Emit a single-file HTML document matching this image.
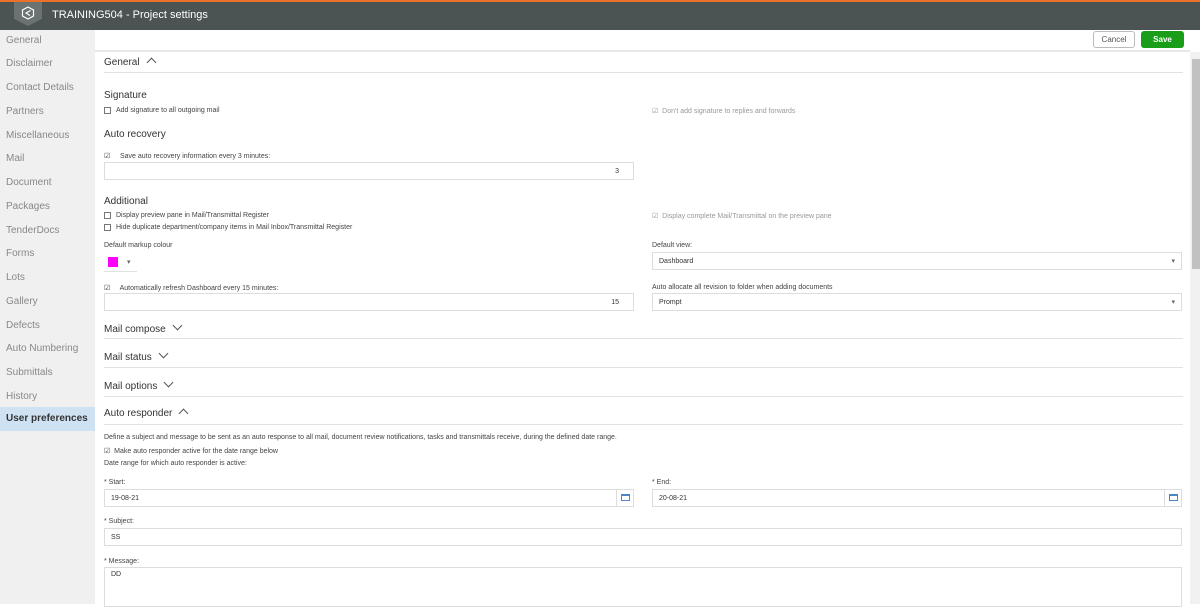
<!DOCTYPE html>
<html><head><meta charset="utf-8"><style>
*{box-sizing:border-box;margin:0;padding:0}
body{width:1200px;height:604px;overflow:hidden;font-family:"Liberation Sans",sans-serif;background:#fff;position:relative;color:#333}
.a{position:absolute}
.hdr{left:0;top:0;width:1200px;height:30px;background:#4b5353;border-top:2px solid #e8722c}
.side{left:0;top:30px;width:95px;height:574px;background:#f0f0f0}
.si{position:absolute;left:0;width:95px;height:23px;line-height:23px;padding-left:6px;font-size:10px;color:#888;margin-top:1px}
.t{font-size:7px;color:#444;white-space:nowrap;margin-top:2px}
.h{font-size:10px;color:#333;margin-top:1px}
.sec{font-size:10px;color:#333;margin-top:1px}
.cb{width:7px;height:7px;border:1px solid #777;background:#fff;margin-top:1px}
.inp{border:1px solid #ddd;background:#fff;font-size:7px;color:#333}
.line{height:1px;background:#e2e2e2}
.chev{display:inline-block;width:7px;height:7px;border-left:1.3px solid #555;border-top:1.3px solid #555;margin-left:8px}
.up{transform:rotate(45deg);vertical-align:-1px}
.dn{transform:rotate(225deg);vertical-align:3px}
</style></head><body>
<div class="a hdr"></div>
<div class="a" style="left:14px;top:2px;width:28px;height:24px;background:#6a7272;clip-path:polygon(0 0,100% 0,100% 70%,50% 100%,0 70%)"></div>
<svg class="a" style="left:21px;top:6px" width="14" height="14" viewBox="0 0 14 14"><polygon points="7,1 12.5,4 12.5,10 7,13 1.5,10 1.5,4" fill="none" stroke="#fff" stroke-width="1.2"/><path d="M9.5 4.5L5 7l4 2.5" stroke="#fff" stroke-width="1.2" fill="none"/></svg>
<div class="a" style="left:52px;top:9px;font-size:11px;color:#fff">TRAINING504 - Project settings</div>
<div class="a side"></div>
<div class="si" style="top:28px">General</div>
<div class="si" style="top:51px">Disclaimer</div>
<div class="si" style="top:75px">Contact Details</div>
<div class="si" style="top:99px">Partners</div>
<div class="si" style="top:123px">Miscellaneous</div>
<div class="si" style="top:146px">Mail</div>
<div class="si" style="top:170px">Document</div>
<div class="si" style="top:194px">Packages</div>
<div class="si" style="top:218px">TenderDocs</div>
<div class="si" style="top:241px">Forms</div>
<div class="si" style="top:265px">Lots</div>
<div class="si" style="top:289px">Gallery</div>
<div class="si" style="top:313px">Defects</div>
<div class="si" style="top:336px">Auto Numbering</div>
<div class="si" style="top:360px">Submittals</div>
<div class="si" style="top:384px">History</div>
<div class="si" style="top:407px;height:24px;line-height:24px;background:#cfe2f3;color:#333;font-weight:bold;margin-top:0">User preferences</div>
<div class="a" style="left:1093px;top:31px;width:42px;height:17px;border:1px solid #bbb;border-radius:3px;font-size:8px;color:#555;text-align:center;line-height:15px">Cancel</div>
<div class="a" style="left:1141px;top:31px;width:43px;height:17px;background:#1a9e1a;border-radius:3px;font-size:8px;color:#fff;text-align:center;line-height:17px;font-weight:bold">Save</div>
<div class="a" style="left:95px;top:50px;width:1095px;height:2px;background:#e8e8e8"></div>
<div class="a" style="left:1190px;top:52px;width:10px;height:552px;background:#f1f1f1"></div>
<div class="a" style="left:1192px;top:59px;width:8px;height:210px;background:#c1c1c1"></div>
<div class="a sec" style="left:104px;top:56px">General<span class="chev up"></span></div>
<div class="a line" style="left:104px;top:72px;width:1079px"></div>
<div class="a h" style="left:104px;top:89px">Signature</div>
<div class="a cb" style="left:104px;top:106px"></div><div class="a t" style="left:116px;top:105px">Add signature to all outgoing mail</div>
<div class="a t" style="left:652px;top:105px;color:#999">☑&nbsp; Don't add signature to replies and forwards</div>
<div class="a h" style="left:104px;top:128px">Auto recovery</div>
<div class="a t" style="left:104px;top:150px">☑&nbsp;&nbsp;&nbsp;&nbsp; Save auto recovery information every 3 minutes:</div>
<div class="a inp" style="left:104px;top:162px;width:530px;height:18px;text-align:right;padding-right:14px;line-height:17px">3</div>
<div class="a h" style="left:104px;top:195px">Additional</div>
<div class="a cb" style="left:104px;top:211px"></div><div class="a t" style="left:116px;top:210px">Display preview pane in Mail/Transmittal Register</div>
<div class="a cb" style="left:104px;top:223px"></div><div class="a t" style="left:116px;top:222px">Hide duplicate department/company items in Mail Inbox/Transmittal Register</div>
<div class="a t" style="left:652px;top:210px;color:#999">☑&nbsp; Display complete Mail/Transmittal on the preview pane</div>
<div class="a t" style="left:104px;top:240px">Default markup colour</div>
<div class="a" style="left:108px;top:257px;width:10px;height:10px;background:#f0f"></div>
<div class="a t" style="left:127px;top:256px;color:#666">▾</div>
<div class="a line" style="left:104px;top:271px;width:33px"></div>
<div class="a t" style="left:652px;top:240px">Default view:</div>
<div class="a inp" style="left:652px;top:252px;width:530px;height:18px;line-height:17px;padding-left:6px">Dashboard<span style="float:right;margin-right:6px;color:#666">▾</span></div>
<div class="a t" style="left:104px;top:282px">☑&nbsp;&nbsp;&nbsp;&nbsp; Automatically refresh Dashboard every 15 minutes:</div>
<div class="a inp" style="left:104px;top:293px;width:530px;height:18px;text-align:right;padding-right:14px;line-height:17px">15</div>
<div class="a t" style="left:652px;top:282px">Auto allocate all revision to folder when adding documents</div>
<div class="a inp" style="left:652px;top:293px;width:530px;height:18px;line-height:17px;padding-left:6px">Prompt<span style="float:right;margin-right:6px;color:#666">▾</span></div>
<div class="a sec" style="left:104px;top:321px">Mail compose<span class="chev dn"></span></div>
<div class="a line" style="left:104px;top:338px;width:1079px"></div>
<div class="a sec" style="left:104px;top:349px">Mail status<span class="chev dn"></span></div>
<div class="a line" style="left:104px;top:367px;width:1079px"></div>
<div class="a sec" style="left:104px;top:378px">Mail options<span class="chev dn"></span></div>
<div class="a line" style="left:104px;top:396px;width:1079px"></div>
<div class="a sec" style="left:104px;top:407px">Auto responder<span class="chev up"></span></div>
<div class="a line" style="left:104px;top:424px;width:1079px"></div>
<div class="a t" style="left:104px;top:432px">Define a subject and message to be sent as an auto response to all mail, document review notifications, tasks and transmittals receive, during the defined date range.</div>
<div class="a t" style="left:104px;top:445px">☑&nbsp; Make auto responder active for the date range below</div>
<div class="a t" style="left:104px;top:458px">Date range for which auto responder is active:</div>
<div class="a t" style="left:104px;top:477px">* Start:</div>
<div class="a inp" style="left:104px;top:489px;width:530px;height:18px;line-height:17px;padding-left:6px">19-08-21</div>
<div class="a" style="left:616px;top:490px;width:1px;height:16px;background:#ddd"></div>
<div class="a" style="left:621px;top:494px;width:9px;height:7px;border:1px solid #4a86c8;border-top-width:2px"></div>
<div class="a t" style="left:652px;top:477px">* End:</div>
<div class="a inp" style="left:652px;top:489px;width:530px;height:18px;line-height:17px;padding-left:6px">20-08-21</div>
<div class="a" style="left:1164px;top:490px;width:1px;height:16px;background:#ddd"></div>
<div class="a" style="left:1169px;top:494px;width:9px;height:7px;border:1px solid #4a86c8;border-top-width:2px"></div>
<div class="a t" style="left:104px;top:516px">* Subject:</div>
<div class="a inp" style="left:104px;top:528px;width:1078px;height:18px;line-height:17px;padding-left:6px">SS</div>
<div class="a t" style="left:104px;top:556px">* Message:</div>
<div class="a inp" style="left:104px;top:567px;width:1078px;height:40px;padding:3px 6px">DD</div>
</body></html>
